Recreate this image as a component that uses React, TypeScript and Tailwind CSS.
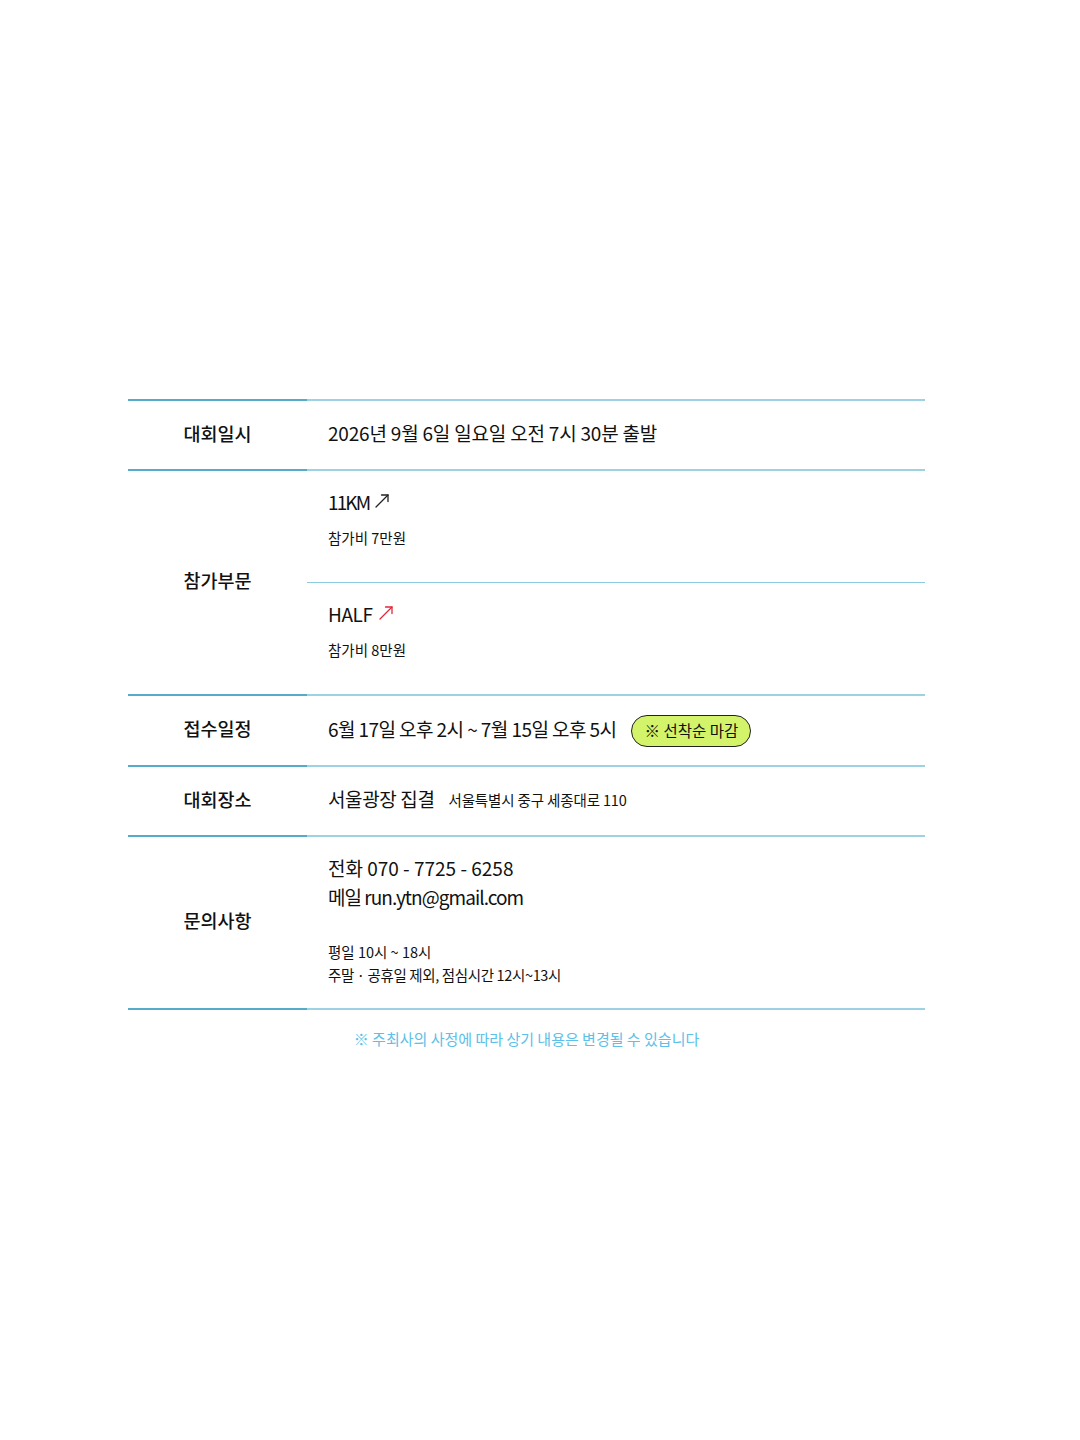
import React from "react";

const font = { fontFamily: '"Noto Sans CJK KR", "Noto Sans", sans-serif' };

const Divider = () => (
  <div className="flex">
    <div className="w-[179px] h-[2px] bg-[#55abc9]" />
    <div className="flex-1 h-[2px] bg-[#9cd2e2]" />
  </div>
);

const Arrow = ({ color }: { color: string }) => (
  <svg width="16" height="16" viewBox="0 0 16 16" fill="none" className="ml-[5px] mb-[2px]">
    <path d="M2 14 L14 2" stroke={color} strokeWidth="1.3" strokeLinecap="round" />
    <path d="M7.5 2 H14 V8.5" stroke={color} strokeWidth="1.3" strokeLinecap="round" strokeLinejoin="round" />
  </svg>
);

const Label = ({ children }: { children: React.ReactNode }) => (
  <div className="w-[179px] shrink-0 flex items-center justify-center pb-[3px] text-[18.5px] font-medium text-[#111]">
    {children}
  </div>
);

const Course = ({ name, fee, arrow, tight }: { name: string; fee: string; arrow: string; tight?: boolean }) => (
  <div className="h-[111px] pt-[19px] pl-[21px]">
    <div className="flex items-center text-[19px] leading-[24px] text-[#111]">
      <span className={tight ? "tracking-[-0.1em]" : "tracking-[-0.02em]"}>{name}</span>
      <Arrow color={arrow} />
    </div>
    <div className="mt-[14px] text-[14.5px] leading-[20px] text-[#111]">{fee}</div>
  </div>
);

export default function App() {
  return (
    <div className="min-h-[1440px] bg-white pt-[399px]" style={font}>
      <div className="ml-[128px] w-[797px]">
        <Divider />
        <div className="flex h-[68px]">
          <Label>대회일시</Label>
          <div className="flex items-center pb-[3px] pl-[21px] text-[19px] text-[#111] tracking-[-0.01em]">
            2026년 9월 6일 일요일 오전 7시 30분 출발
          </div>
        </div>

        <Divider />
        <div className="flex">
          <Label>참가부문</Label>
          <div className="flex-1 flex flex-col">
            <Course name="11KM" fee="참가비 7만원" arrow="#222" tight />
            <div className="h-[1px] bg-[#8ccbe0]" />
            <Course name="HALF" fee="참가비 8만원" arrow="#e0283a" />
          </div>
        </div>

        <Divider />
        <div className="flex h-[69px]">
          <Label>접수일정</Label>
          <div className="flex items-center pb-[3px] pl-[21px] text-[19px] text-[#111]">
            <span className="tracking-[-0.03em]">6월 17일 오후 2시 ~ 7월 15일 오후 5시</span>
            <span className="ml-[15px] mt-[3px] inline-flex items-center justify-center h-[32px] w-[120px] rounded-full border-[1.5px] border-[#222] bg-[#d3f46a] text-[15.5px] text-[#111]">
              ※ 선착순 마감
            </span>
          </div>
        </div>

        <Divider />
        <div className="flex h-[68px]">
          <Label>대회장소</Label>
          <div className="flex items-center pb-[3px] pl-[21px] text-[#111]">
            <span className="text-[19px] tracking-[-0.02em]">서울광장 집결</span>
            <span className="ml-[14px] text-[14.5px] tracking-[-0.01em]">서울특별시 중구 세종대로 110</span>
          </div>
        </div>

        <Divider />
        <div className="flex h-[171px]">
          <Label>문의사항</Label>
          <div className="pl-[21px] pt-[16px] text-[#111]">
            <div className="text-[19px] leading-[29px]">전화 070 - 7725 - 6258</div>
            <div className="text-[19px] leading-[29px] tracking-[-0.05em]">메일 run.ytn@gmail.com</div>
            <div className="mt-[29px] text-[14.5px] leading-[23px]">평일 10시 ~ 18시</div>
            <div className="text-[14.5px] leading-[23px] tracking-[-0.025em]">주말 · 공휴일 제외, 점심시간 12시~13시</div>
          </div>
        </div>

        <Divider />
        <p className="mt-[18px] text-center text-[15px] text-[#5cc0e8]">
          ※ 주최사의 사정에 따라 상기 내용은 변경될 수 있습니다
        </p>
      </div>
    </div>
  );
}
